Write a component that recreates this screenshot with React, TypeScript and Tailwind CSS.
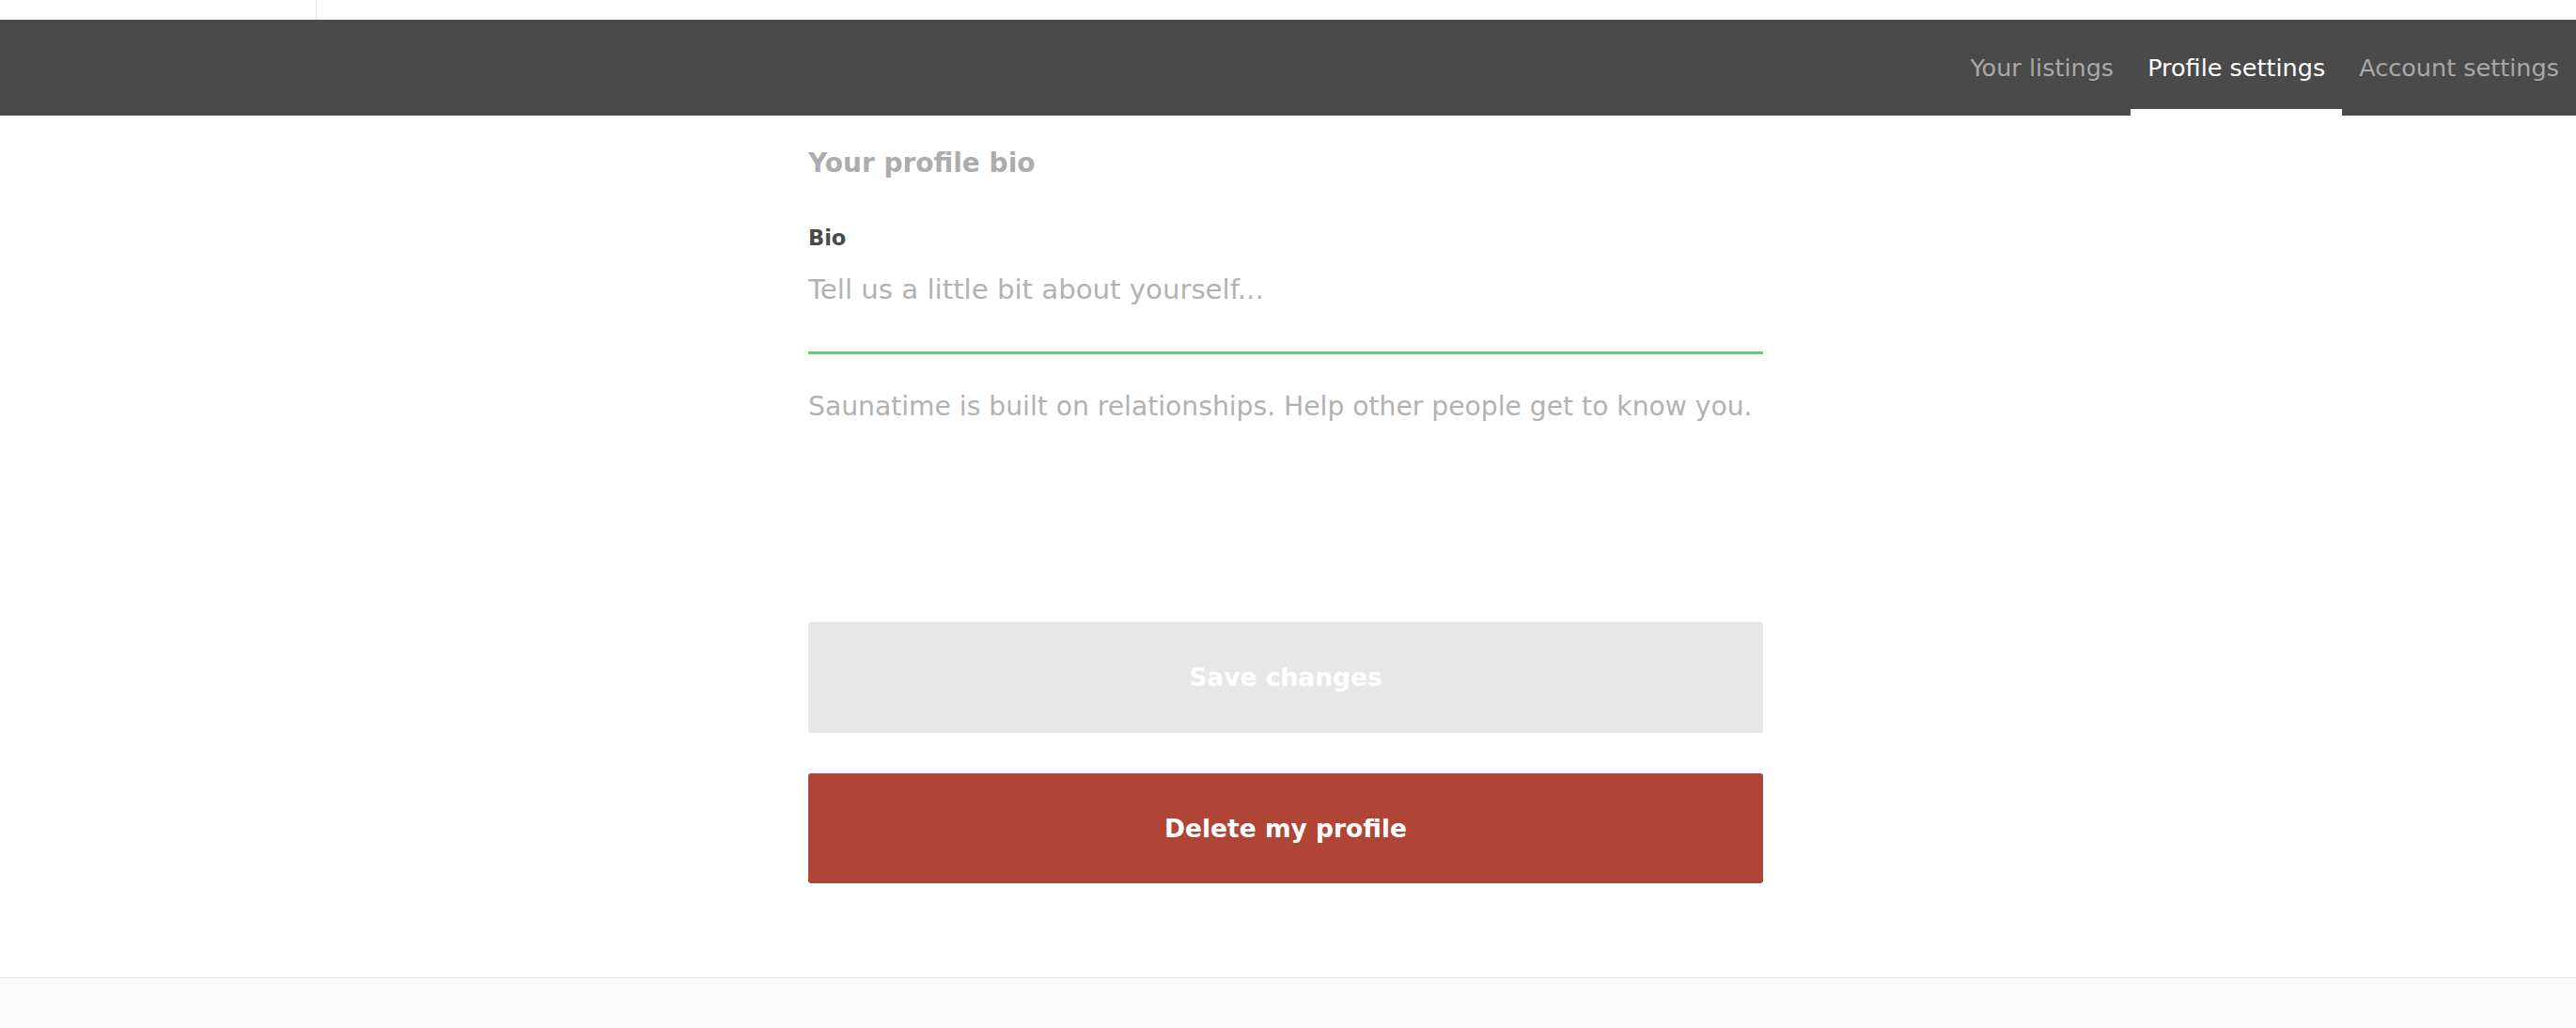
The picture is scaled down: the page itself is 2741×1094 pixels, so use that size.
import { useState } from "react";

const tabs = [
    { label: "Your listings", active: false },
    { label: "Profile settings", active: true },
    { label: "Account settings", active: false },
];

export default function App() {
    const [bio, setBio] = useState("");

    return (
        <div className="min-h-screen bg-white font-['DejaVu_Sans',sans-serif] text-[#4a4a4a]">
            {/* top strip */}
            <div className="h-[21px] flex">
                <div className="w-[337px] border-r border-[#e4e4e4]" />
            </div>

            {/* tabs bar */}
            <nav className="h-[102px] bg-[#4a4a4a] flex justify-end">
                {tabs.map((tab) => (
                    <a
                        key={tab.label}
                        href="#"
                        className={
                            tab.active
                                ? "px-[18px] flex items-center border-b-[7px] border-white text-white text-[25.5px] pt-[7px]"
                                : "px-[18px] flex items-center border-b-[7px] border-transparent text-[#a8a8a8] text-[25.5px] pt-[7px]"
                        }
                    >
                        {tab.label}
                    </a>
                ))}
            </nav>

            {/* form */}
            <main className="w-[1016px] ml-[860px] pt-[33px]">
                <h2 className="text-[28px] leading-[36px] font-bold text-[#acacac]">Your profile bio</h2>

                <label htmlFor="bio" className="block mt-[45px] text-[22.5px] leading-[32px] font-bold text-[#4a4a4a]">
                    Bio
                </label>
                <textarea
                    id="bio"
                    value={bio}
                    onChange={(e) => setBio(e.target.value)}
                    placeholder="Tell us a little bit about yourself..."
                    className="block w-full h-[87px] mt-[21px] resize-none outline-none text-[29.2px] leading-[36px] pt-0 border-b-[3px] border-[#67c97c] placeholder:text-[#b2b2b2]"
                />
                <p className="mt-[38px] text-[28.2px] leading-[36px] text-[#b2b2b2]">
                    Saunatime is built on relationships. Help other people get to know you.
                </p>

                <button
                    disabled
                    className="block w-full h-[118px] mt-[211px] rounded-[3px] bg-[#e7e7e7] text-white text-[26.5px] font-bold"
                >
                    Save changes
                </button>
                <button className="block w-full h-[117px] mt-[43px] rounded-[3px] bg-[#b04436] text-white text-[26.5px] font-bold">
                    Delete my profile
                </button>
            </main>

            <footer className="mt-[100px] h-[60px] border-t border-[#e7e7e7] bg-[#fafafa]" />
        </div>
    );
}
